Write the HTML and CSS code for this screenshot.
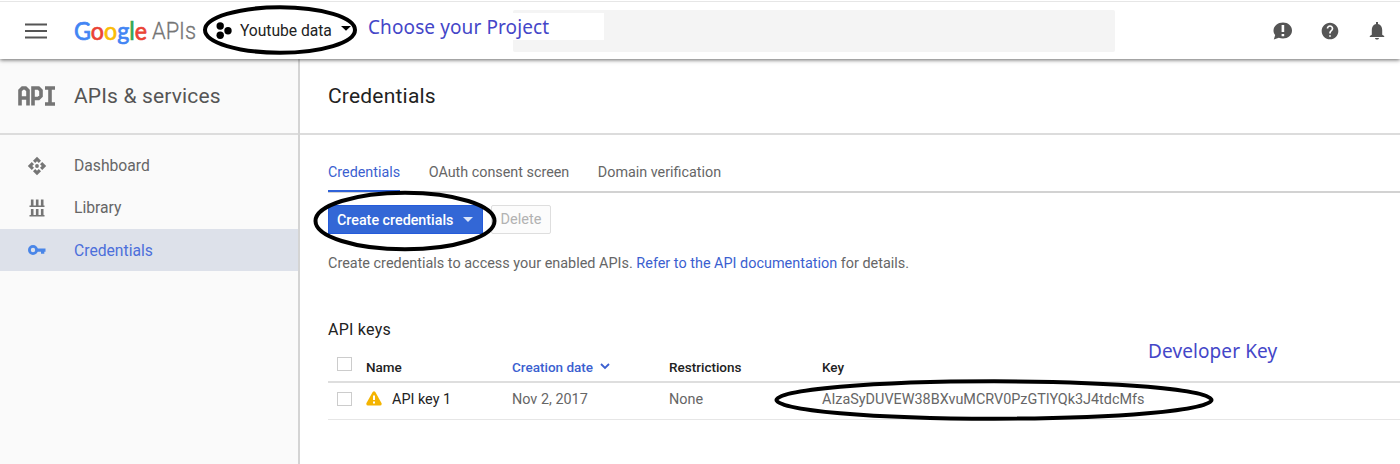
FILE: index.html
```html
<!DOCTYPE html>
<html lang="en">
<head>
<meta charset="utf-8">
<title>Credentials - Google APIs</title>
<link rel="stylesheet" href="styles.css">
</head>
<body>
<header class="topbar">
  <svg class="menu-icon" width="22" height="16" viewBox="0 0 22 16"><path d="M0 1.500h22M0 8h22M0 14.500h22" stroke="#555" stroke-width="2"/></svg>
  <svg class="logo" width="124" height="34" viewBox="0 0 124 34">
    <text class="google" x="0" y="26" textLength="73" lengthAdjust="spacingAndGlyphs"><tspan class="blue">G</tspan><tspan class="red">o</tspan><tspan class="yellow">o</tspan><tspan class="blue">g</tspan><tspan class="green">l</tspan><tspan class="red">e</tspan></text>
    <text class="apis" x="78" y="25" textLength="44" lengthAdjust="spacingAndGlyphs">APIs</text>
  </svg>
  <div class="project">
    <svg width="16" height="18" viewBox="0 0 16 18"><circle cx="4.200" cy="4" r="3.700"/><circle cx="4.200" cy="13.200" r="3.700"/><circle cx="12" cy="8.700" r="3.700"/></svg>
    <span>Youtube data</span>
    <svg class="project-arrow" width="10" height="5" viewBox="0 0 10 5"><path d="M0 0h10L5 4.800z"/></svg>
    <svg class="ring ring-project" width="156" height="52" viewBox="0 0 156 52"><ellipse cx="78" cy="26" rx="75" ry="22.700"/></svg>
  </div>
  <div class="search"><div class="search-patch"></div><span class="note note-project">Choose your Project</span></div>
  <div class="actions">
    <svg width="20" height="18" viewBox="0 0 20 18"><path fill="#555" d="M10 0.500C15 .5 19 4 19 8.500S15 16.500 10 16.500C8.500 16.500 7 16.200 5.800 15.700L.8 17.500 2.200 13C1 11.800.5 10.200.5 8.500.5 4 5 .5 10 .5z"/><path d="M8.600 3h2.600v7H8.600zM8.600 12h2.600v2.300H8.600z" fill="#fff"/></svg>
    <svg width="20" height="20" viewBox="0 0 24 24"><path fill="#555" d="M12 2C6.480 2 2 6.480 2 12s4.480 10 10 10 10-4.480 10-10S17.520 2 12 2zm1 17h-2v-2h2v2zm2.070-7.750l-.9.920C13.450 12.900 13 13.500 13 15h-2v-.5c0-1.100.45-2.100 1.170-2.830l1.240-1.260c.37-.36.59-.86.59-1.410 0-1.100-.9-2-2-2s-2 .9-2 2H8c0-2.210 1.790-4 4-4s4 1.790 4 4c0 .88-.36 1.680-.93 2.250z"/></svg>
    <svg width="16" height="18" viewBox="0 0 16 18"><path fill="#555" d="M7 0h2v2c3 .7 4.200 3 4.200 6v4.700L15.200 14v1H.8v-1l2-1.300V8C2.800 5 4 2.700 7 2zM6 16h4C9.800 18 6.200 18 6 16z"/></svg>
  </div>
</header>
<div class="layout">
  <aside class="sidebar">
    <div class="section-head">
      <svg width="38" height="20" viewBox="0 0 38 20"><path d="M2 19.500V4.500L4.500 2h3L10 4.500v15M2 12h8M15 19.500V2h5.500L23 4.500V10l-2.500 2.500H15M27 2h10M27 18h10M32 2v16" fill="none" stroke="#757575" stroke-width="3.600"/></svg>
      <span>APIs &amp; services</span>
    </div>
    <nav>
      <a class="item"><svg width="20" height="20" viewBox="0 0 20 20"><g fill="#757575"><path d="M10 .8l4 4-2.200 2.200L10 5.200 8.200 7 6 4.800z"/><path d="M10 19.200l4-4-2.200-2.200-1.800 1.800L8.200 13 6 15.200z"/><path d="M.8 10l4-4L7 8.200 5.200 10 7 11.800 4.800 14z"/><path d="M19.200 10l-4-4L13 8.200l1.800 1.800-1.800 1.800 2.200 2.200z"/><circle cx="10" cy="10" r="1.900"/></g></svg><span>Dashboard</span></a>
      <a class="item"><svg width="20" height="20" viewBox="0 0 20 20"><path d="M2.500 8.200h15M2.500 17.700h15" stroke="#757575" stroke-width="1.400"/><path d="M5.200 1.500V8M10.200 1.500V8M15.200 1.500V8M5.200 11v6.500M10.200 11v6.500M15.200 11v6.500" stroke="#757575" stroke-width="2.600"/></svg><span>Library</span></a>
      <a class="item selected"><svg width="20" height="20" viewBox="0 0 20 20"><circle cx="6" cy="10" r="3.600" fill="none" stroke="#4a86e8" stroke-width="2.800"/><path d="M9.500 8.400H18.500v3.400h-1.200v2h-3.300v-2h-4.500z" fill="#4a86e8"/></svg><span>Credentials</span></a>
    </nav>
  </aside>
  <main>
    <h1>Credentials</h1>
    <div class="content">
      <div class="tabs"><span class="tab active">Credentials</span><span class="tab">OAuth consent screen</span><span class="tab">Domain verification</span></div>
      <div class="buttons">
        <div class="create"><span>Create credentials</span><svg width="10" height="5" viewBox="0 0 10 5"><path d="M0 0h10L5 5z" fill="#dce6fa"/></svg>
          <svg class="ring ring-create" width="184" height="62" viewBox="0 0 184 62"><ellipse cx="92" cy="31" rx="89.500" ry="28.300"/></svg></div>
        <div class="delete">Delete</div>
      </div>
      <p class="help">Create credentials to access your enabled APIs. <a>Refer to the API documentation</a> for details.</p>
      <h2>API keys</h2>
      <div class="table">
        <div class="row head"><i class="check"></i><b class="name">Name</b><b class="date sorted">Creation date<svg width="10" height="7" viewBox="0 0 10 7"><path d="M1 1l4 4 4-4" fill="none" stroke="#3b5fd0" stroke-width="1.800"/></svg></b><b class="restrictions">Restrictions</b><b class="key">Key</b></div>
        <div class="row body"><i class="check"></i><span class="name"><svg width="16" height="15" viewBox="0 0 16 15"><path d="M6.700 1Q8-.6 9.300 1l6.300 11.300Q16 14.500 14 14.500H2Q0 14.500.4 12.300z" fill="#f4b400"/><path d="M7 4.500h2V9H7zM7 10.500h2v2H7z" fill="#fff"/></svg>API key 1</span><span class="date">Nov 2, 2017</span><span class="restrictions">None</span><span class="key"><span>AIzaSyDUVEW38BXvuMCRV0PzGTlYQk3J4tdcMfs</span><svg class="ring ring-key" width="440" height="42" viewBox="0 0 440 42"><ellipse cx="220" cy="21" rx="217.500" ry="18.700"/></svg></span></div>
        <span class="note note-key">Developer Key</span>
      </div>
    </div>
  </main>
</div>
</body>
</html>
```

FILE: styles.css
```css
* { box-sizing: border-box; }
body { margin: 0; height: 464px; overflow: hidden; display: flex; flex-direction: column; font-family: Roboto, "Liberation Sans", sans-serif; color: #666; background: #fff; }
svg { flex: none; }
.topbar { position: relative; z-index: 1; height: 59px; flex: none; display: flex; align-items: center; padding: 2px 15px 0 25px; background: linear-gradient(#fff 1px, #e6e6e6 1px, #e6e6e6 2px, #fff 2px); box-shadow: 0 1px 4px rgba(0,0,0,.6); }
.logo { margin-left: 27px; overflow: visible; }
.google { font: 25px Lato, sans-serif; stroke-width: .7; }
.blue { fill: #4285f4; stroke: #4285f4; }
.red { fill: #ea4335; stroke: #ea4335; }
.yellow { fill: #fbbc05; stroke: #fbbc05; }
.green { fill: #34a853; stroke: #34a853; }
.apis { font: 300 23px Roboto, sans-serif; fill: #757575; stroke: #757575; stroke-width: .3; }
.project { position: relative; display: flex; align-items: center; margin-left: 18px; width: 134px; font-size: 15.700px; color: #222; white-space: nowrap; }
.project span { margin-left: 8px; letter-spacing: -.05px; }
.project-arrow { margin: -4px 0 0 9px; }
.ring { position: absolute; fill: none; stroke: #000; stroke-width: 4; pointer-events: none; }
.ring-project { left: -14px; top: -17px; }
.search { position: relative; width: 602px; height: 42px; margin-left: 163px; background: #f4f4f4; border-radius: 2px; }
.search-patch { width: 91px; height: 27px; margin-top: 3px; background: #fff; }
.note { position: absolute; font: 19px "Noto Sans", sans-serif; letter-spacing: .1px; color: #4446c8; white-space: nowrap; }
.note-project { left: -145px; top: 4px; }
.actions { margin-left: auto; display: flex; align-items: center; gap: 28px; }
.actions svg:nth-child(2) { margin: 0 1px 0 -1px; }
.layout { flex: 1; display: flex; }
.sidebar { width: 300px; flex: none; background: #fafafa; border-right: 2px solid #d4d4d4; }
.section-head { height: 76px; display: flex; align-items: center; padding-left: 18px; border-bottom: 2px solid #dcdcdc; font-size: 21px; color: #555; }
.section-head span { margin-left: 18px; letter-spacing: .15px; }
nav { padding-top: 9.500px; }
.item { height: 42.300px; display: flex; align-items: center; padding-left: 27px; font-size: 15.700px; }
.item span { margin-left: 27px; }
.item.selected { background: #dde1ea; color: #4c6fdb; }
main { flex: 1; min-width: 0; }
h1 { margin: 0; height: 76px; padding-left: 28px; border-bottom: 2px solid #dcdcdc; font: 400 21px/75px Roboto, sans-serif; letter-spacing: .2px; color: #222; }
.content { padding-left: 28px; }
.tabs { height: 58px; display: flex; border-bottom: 2px solid #d2d2d2; font-size: 14.350px; line-height: 76px; }
.tab { height: 57px; margin-right: 28.500px; white-space: nowrap; }
.active { color: #3b5fd0; border-bottom: 2px solid #2f62d9; }
.buttons { display: flex; gap: 8px; margin-top: 12px; }
.create { position: relative; width: 155px; height: 29px; display: flex; align-items: center; justify-content: space-between; padding: 0 9px 0 8px; background: #3367d6; border: 1px solid #245bdb; color: #fff; font-size: 14.300px; font-weight: 500; white-space: nowrap; }
.ring-create { left: -16px; top: -16px; }
.delete { width: 60px; height: 29px; border: 1px solid #dedede; background: #fcfcfc; border-radius: 2px; font-size: 14.500px; line-height: 27px; text-align: center; color: #b2b2b2; }
.help { margin: 20px 0 0; font-size: 14.430px; line-height: 20px; white-space: nowrap; }
.help a { color: #3b5fd0; }
h2 { margin: 46px 0 0; font: 400 16px/20px Roboto, sans-serif; letter-spacing: .25px; color: #222; }
.table { position: relative; }
.row { display: flex; align-items: center; font-size: 14.400px; }
.check { width: 15px; height: 14px; margin-left: 9px; border: 1.500px solid #ccc; background: #fff; }
.head { height: 43px; padding-top: 12px; border-bottom: 2px solid #dedede; font-size: 13.500px; }
.head .check { margin-top: -5px; }
.row b { font-weight: 500; color: #222; }
.name { width: 146px; margin-left: 14px; display: flex; align-items: center; gap: 10px; color: #222; }
.name svg { margin-top: -2px; }
.date { width: 157px; }
.row .sorted { color: #3b5fd0; }
.sorted svg { margin: 0 0 2px 7px; }
.restrictions { width: 153px; }
.key { position: relative; white-space: nowrap; }
.body { height: 37px; padding-bottom: 3px; border-bottom: 1px solid #e6e6e6; }
.body .check { margin-top: -1px; }
.ring-key { left: -48px; top: -12px; }
.note-key { left: 820px; top: -2px; }
```
